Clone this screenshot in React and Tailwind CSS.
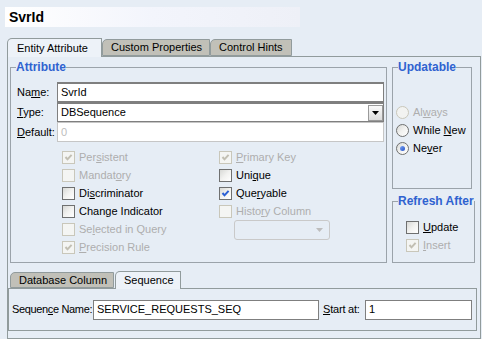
import React from "react";

function M({ t, u }) {
  if (u < 0 || u === undefined) return <>{t}</>;
  return (
    <>
      {t.slice(0, u)}
      <span className="underline underline-offset-[1px]">{t[u]}</span>
      {t.slice(u + 1)}
    </>
  );
}

function Box({ checked, disabled }) {
  return (
    <span
      className={
        disabled
          ? "relative block w-[13px] h-[13px] shrink-0 border border-[#c9c7ba] bg-[#f4f5f3]"
          : "relative block w-[13px] h-[13px] shrink-0 border border-[#6f7070] bg-gradient-to-br from-[#d8d9d6] via-[#f2f2f0] to-white"
      }
    >
      {checked && (
        <svg className="absolute left-0 top-0" width="11" height="11" viewBox="0 0 11 11">
          <path
            d="M2.5 5 L4.5 7.3 L8.6 2.8"
            stroke={disabled ? "#c2bfb3" : "#2a5fd4"}
            strokeWidth="2"
            fill="none"
          />
        </svg>
      )}
    </span>
  );
}

function CheckRow({ label, u, checked, disabled }) {
  return (
    <div className="flex h-[18px] items-center gap-[4px]">
      <Box checked={checked} disabled={disabled} />
      <span className={disabled ? "text-[#aeaeae] whitespace-nowrap" : "text-black whitespace-nowrap"}>
        <M t={label} u={u} />
      </span>
    </div>
  );
}

function Radio({ label, u, checked, disabled }) {
  return (
    <div className="flex h-[18px] items-center gap-[4px]">
      <span
        className={
          disabled
            ? "relative block w-[13px] h-[13px] shrink-0 rounded-full border border-[#c9c7ba] bg-[#f2f3f1]"
            : "relative block w-[13px] h-[13px] shrink-0 rounded-full border border-[#6f7070] bg-gradient-to-br from-[#d8d9d6] via-[#f2f2f0] to-white"
        }
      >
        {checked && (
          <span className="absolute left-[3px] top-[3px] block w-[5px] h-[5px] rounded-full bg-gradient-to-br from-[#7ea3f0] to-[#2350c8]" />
        )}
      </span>
      <span className={disabled ? "text-[#aeaeae] whitespace-nowrap" : "text-black whitespace-nowrap"}>
        <M t={label} u={u} />
      </span>
    </div>
  );
}

function Triangle({ color }) {
  return (
    <svg width="7" height="4" viewBox="0 0 7 4">
      <path d="M0 0 H7 L3.5 4 Z" fill={color} />
    </svg>
  );
}

export default function App() {
  return (
    <div className="w-[482px] h-[339px] overflow-hidden bg-[#e6edf5] text-[11px] leading-[13px] text-black font-['Liberation_Sans',Arial,sans-serif]">
      {/* title */}
      <div className="pt-[7px] pl-[5px]">
        <div className="h-[20px] w-[295px] bg-gradient-to-r from-white via-[#f3f5fc] to-[#eef0f7] pl-[4px] text-[14px] font-bold leading-[20px]">
          SvrId
        </div>
      </div>

      {/* top tabs */}
      <div className="mt-[11px] ml-[7px] flex h-[18px] items-end">
        <div className="relative z-10 -mb-px flex h-[19px] w-[95px] items-center rounded-tl-[5px] border border-b-0 border-[#919b9c] bg-[#edf2f8] pl-[9px]">
          Entity Attribute
        </div>
        <div className="flex h-[17px] w-[108px] items-center rounded-tl-[5px] border border-[#919b9c] bg-[#c1c0b8] pl-[8px]">
          Custom Properties
        </div>
        <div className="flex h-[17px] w-[82px] items-center rounded-tl-[5px] border border-[#919b9c] bg-[#c1c0b8] pl-[8px]">
          Control Hints
        </div>
      </div>

      {/* main panel */}
      <div className="ml-[7px] w-[474px] h-[283px] border border-[#919b9c] bg-[#e6edf5]">
        <div className="flex gap-[5px] pl-[2px] pt-[3px]">
          {/* Attribute group */}
          <fieldset className="w-[377px] h-[203px] border border-[#9ba3aa] pr-[2px] pl-[6px] pt-[8px]">
            <legend className="ml-[-1px] px-0 text-[12px] font-bold leading-[14px] text-[#2f62d0]">Attribute</legend>
            <div className="flex h-[20px] items-center">
              <span className="w-[40px]"><M t="Name:" u={2} /></span>
              <div className="flex h-[20px] flex-1 items-center border border-[#7f7f7f] border-t-2 bg-white pl-[3px]">SvrId</div>
            </div>
            <div className="flex h-[20px] items-center">
              <span className="w-[40px]"><M t="Type:" u={0} /></span>
              <div className="flex h-[20px] flex-1 items-center border border-[#7f7f7f] border-t-2 bg-white pl-[3px]">
                <span className="flex-1">DBSequence</span>
                <span className="flex h-[16px] w-[15px] items-center justify-center border border-[#9a9a9a] bg-gradient-to-b from-[#fafafa] to-[#dcdcdc]">
                  <Triangle color="#000" />
                </span>
              </div>
            </div>
            <div className="flex h-[20px] items-center">
              <span className="w-[40px]"><M t="Default:" u={0} /></span>
              <div className="flex h-[20px] flex-1 items-center border border-[#c6c6c6] bg-white pl-[3px] text-[#bdbdbd]">0</div>
            </div>

            <div className="mt-[6px] ml-[45px] flex">
              <div className="w-[157px]">
                <CheckRow label="Persistent" u={3} checked disabled />
                <CheckRow label="Mandatory" u={6} disabled />
                <CheckRow label="Discriminator" u={2} />
                <CheckRow label="Change Indicator" u={4} />
                <CheckRow label="Selected in Query" u={2} disabled />
                <CheckRow label="Precision Rule" u={0} checked disabled />
              </div>
              <div>
                <CheckRow label="Primary Key" u={0} checked disabled />
                <CheckRow label="Unique" u={3} />
                <CheckRow label="Queryable" u={3} checked />
                <CheckRow label="History Column" u={5} disabled />
                <div className="ml-[15px] flex h-[20px] w-[96px] items-center justify-end rounded-[3px] border border-[#c9c9c9] pr-[6px]">
                  <Triangle color="#bdbdbd" />
                </div>
              </div>
            </div>
          </fieldset>

          {/* right column */}
          <div className="flex flex-col">
            <fieldset className="w-[80px] h-[129px] border border-[#9ba3aa] pl-[3px] pt-[29px]">
              <legend className="ml-[2px] px-0 text-[12px] font-bold leading-[14px] text-[#2f62d0]">Updatable</legend>
              <Radio label="Always" u={2} disabled />
              <Radio label="While New" u={6} />
              <Radio label="Never" u={2} checked />
            </fieldset>
            <fieldset className="mt-[5px] w-[80px] h-[69px] border border-[#9ba3aa] pl-[13px] pt-[10px]">
              <legend className="ml-[-8px] whitespace-nowrap px-0 text-[12px] font-bold leading-[14px] text-[#2f62d0]">Refresh After</legend>
              <CheckRow label="Update" u={0} />
              <CheckRow label="Insert" u={0} checked disabled />
            </fieldset>
          </div>
        </div>

        {/* sub tabs */}
        <div className="mt-[8px] ml-[2px] flex h-[17px] items-end">
          <div className="flex h-[16px] w-[104px] items-center rounded-tl-[5px] border border-[#919b9c] bg-[#c1c0b8] pl-[8px]">
            Database Column
          </div>
          <div className="relative z-10 -mb-px ml-[1px] flex h-[18px] w-[66px] items-center rounded-tl-[5px] border border-b-0 border-[#919b9c] bg-[#edf2f8] pl-[8px]">
            Sequence
          </div>
        </div>
        <div className="w-[469px] h-[43px] border border-[#919b9c] flex items-center pl-[3px]">
          <span className="w-[81px] whitespace-nowrap tracking-[-0.35px]"><M t="Sequence Name:" u={6} /></span>
          <div className="flex h-[20px] w-[226px] items-center border border-[#7f7f7f] bg-white pl-[3px]">SERVICE_REQUESTS_SEQ</div>
          <span className="ml-[4px] w-[42px] whitespace-nowrap tracking-[-0.2px]"><M t="Start at:" u={0} /></span>
          <div className="flex h-[20px] w-[107px] items-center border border-[#7f7f7f] bg-white pl-[3px]">1</div>
        </div>
      </div>
    </div>
  );
}
